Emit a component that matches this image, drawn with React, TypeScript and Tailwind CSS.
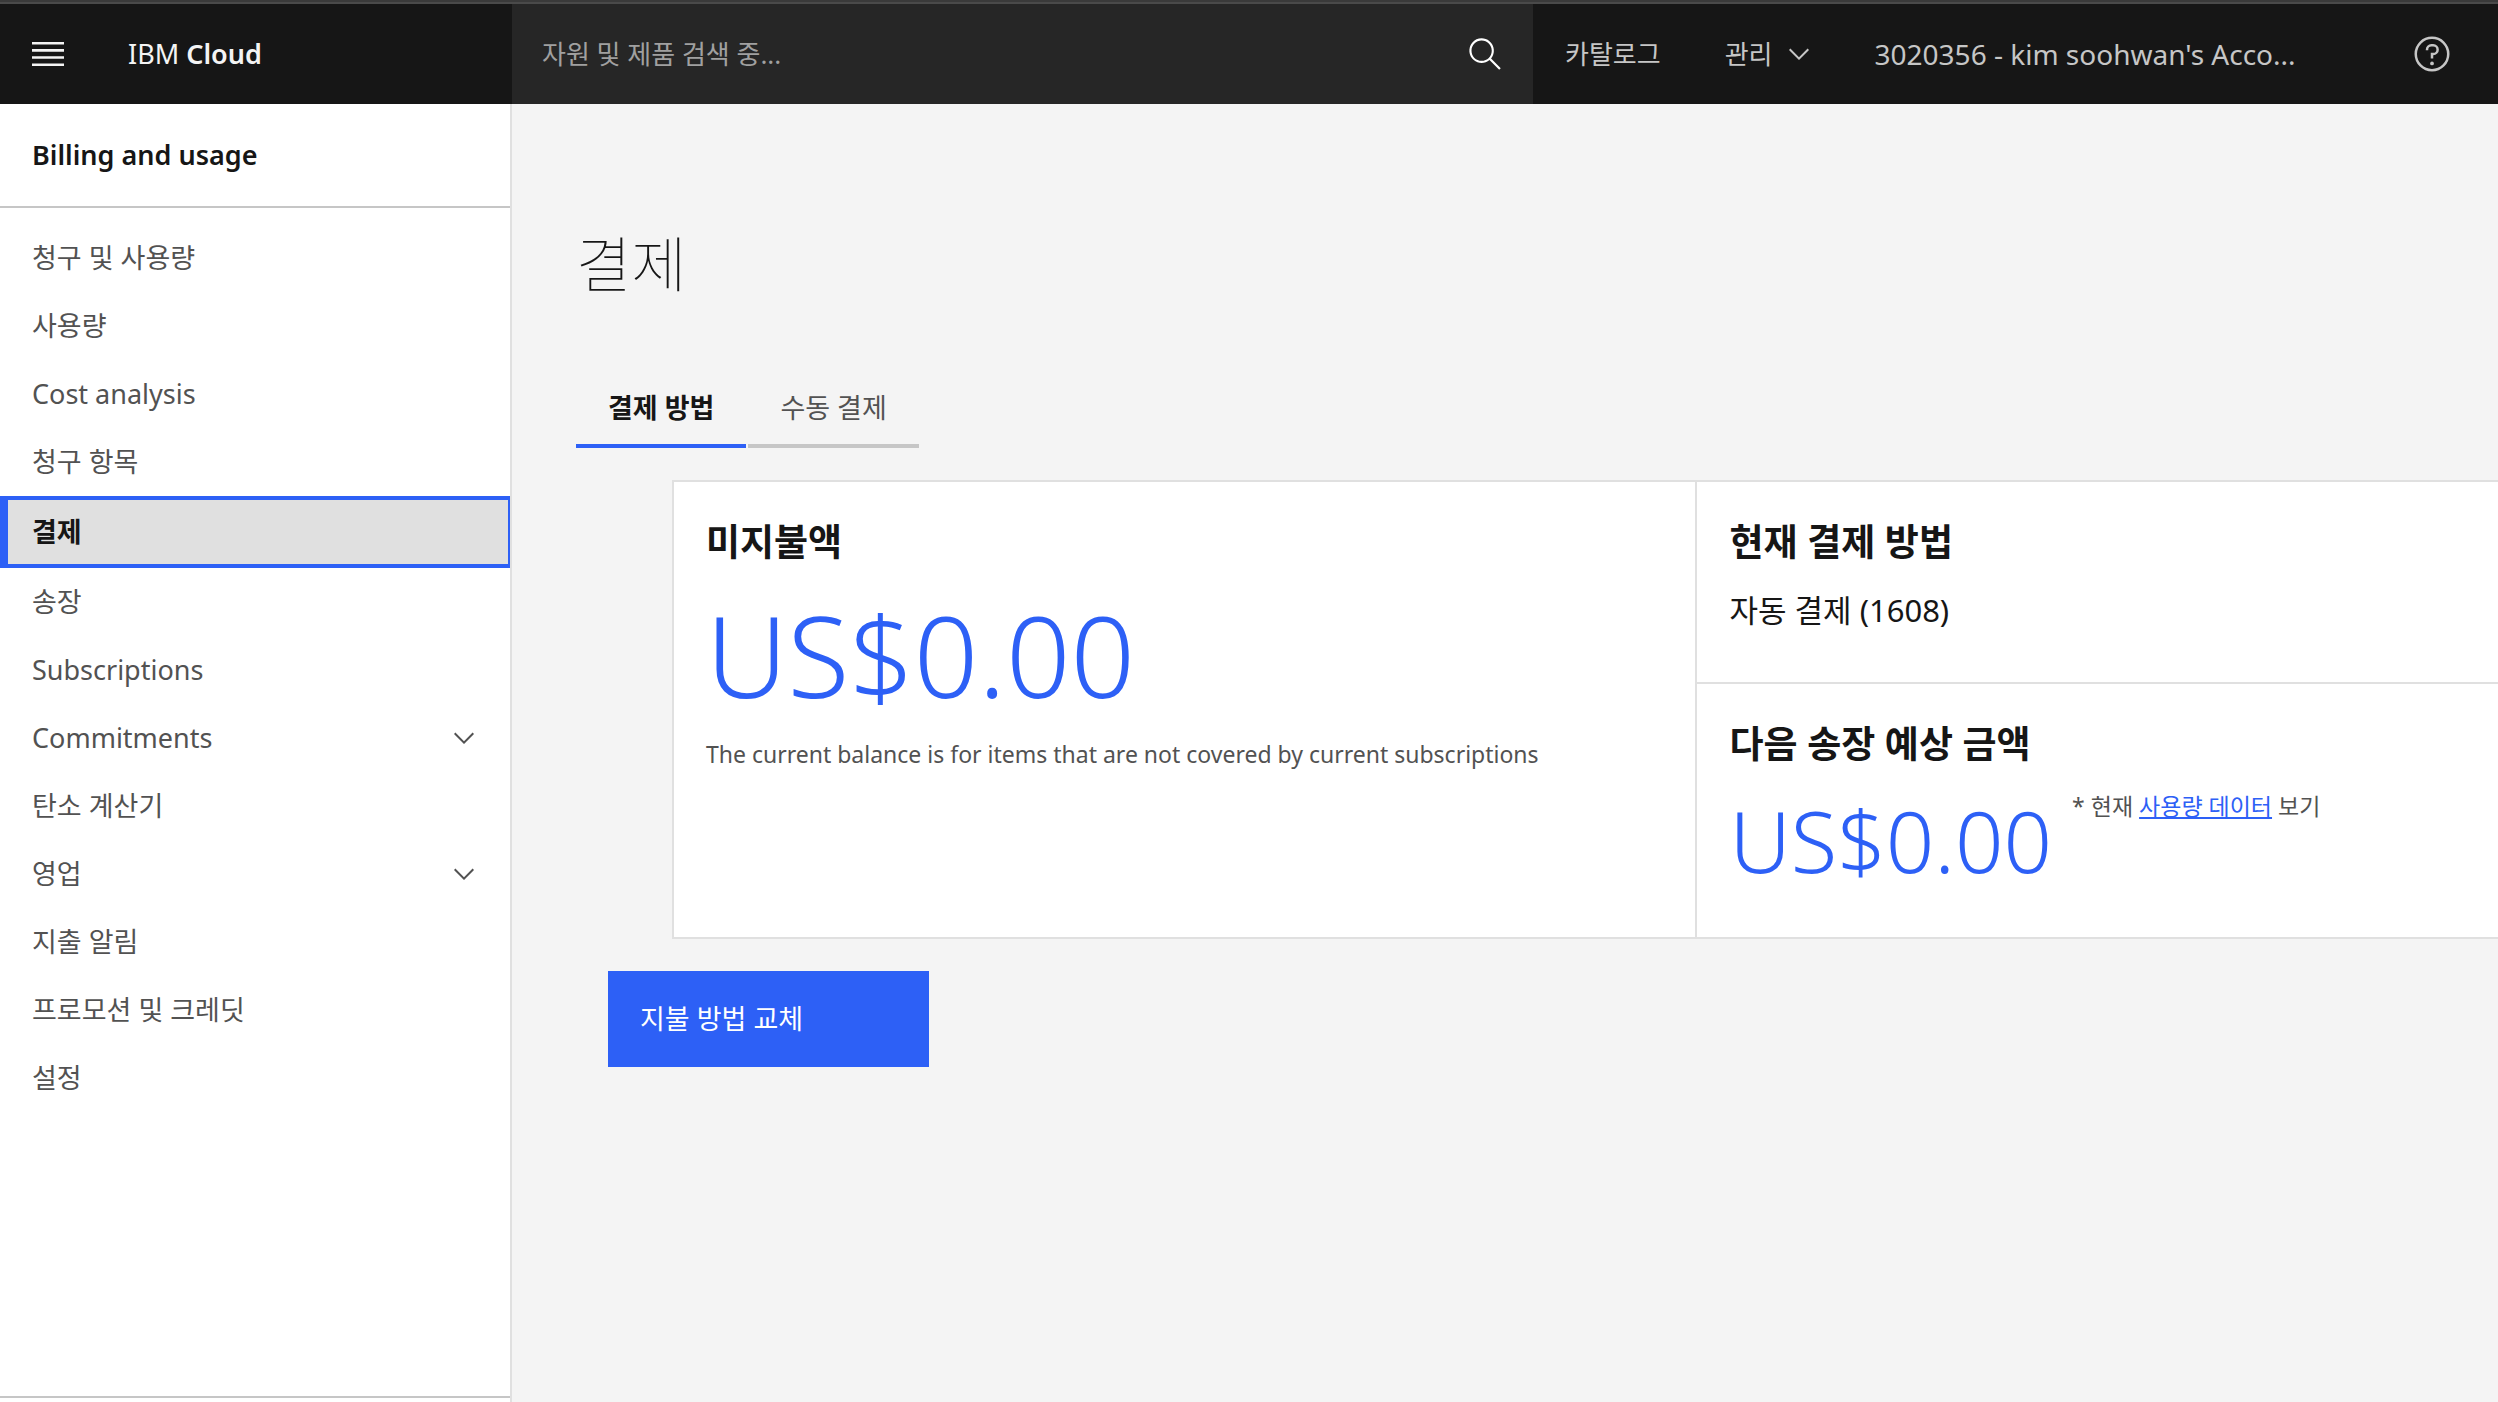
import clsx from "clsx";

const NAV_ITEMS = [
  { label: "청구 및 사용량" },
  { label: "사용량" },
  { label: "Cost analysis" },
  { label: "청구 항목" },
  { label: "결제", active: true },
  { label: "송장" },
  { label: "Subscriptions" },
  { label: "Commitments", expandable: true },
  { label: "탄소 계산기" },
  { label: "영업", expandable: true },
  { label: "지출 알림" },
  { label: "프로모션 및 크레딧" },
  { label: "설정" },
];

function ChevronDown({ className }: { className?: string }) {
  return (
    <svg viewBox="0 0 16 16" fill="currentColor" className={className} aria-hidden="true">
      <path d="M8 11L3 6l.7-.7L8 9.6l4.3-4.3.7.7z" />
    </svg>
  );
}

function Header() {
  return (
    <header className="flex h-[102px] items-stretch border-t-2 border-[#4a4a4a] bg-[#161616] text-[26px] text-[#c6c6c6]">
      <div className="flex w-128 shrink-0 items-center pl-8 text-[27px] text-[#f4f4f4]">
        <button type="button" aria-label="메뉴" className="mr-16">
          <svg viewBox="0 0 32 24" fill="currentColor" className="h-6 w-8">
            <path d="M0 0h32v2.6H0zM0 7.1h32v2.6H0zM0 14.2h32v2.6H0zM0 21.4h32V24H0z" />
          </svg>
        </button>
        <a href="#home">
          IBM <span className="font-semibold">Cloud</span>
        </a>
      </div>
      <form className="flex w-[1021px] shrink items-center bg-[#262626] px-[30px]">
        <input
          type="text"
          aria-label="검색"
          placeholder="자원 및 제품 검색 중..."
          className="min-w-0 flex-1 bg-transparent outline-none placeholder:text-[#a0a0a0]"
        />
        <button type="button" aria-label="검색" className="text-white">
          <svg viewBox="0 0 16 16" fill="currentColor" className="size-9">
            <path d="M15 14.3L10.7 10c1.9-2.3 1.6-5.8-.7-7.7S4.2.7 2.3 3 .7 8.8 3 10.7c2 1.7 5 1.7 7 0l4.3 4.3.7-.7zM2 6.5C2 4 4 2 6.5 2S11 4 11 6.5 9 11 6.5 11 2 9 2 6.5z" />
          </svg>
        </button>
      </form>
      <nav className="flex flex-1 items-center whitespace-nowrap">
        <a href="#catalog" className="px-8">
          카탈로그
        </a>
        <button type="button" className="flex items-center gap-2.5 pr-7 pl-8">
          관리
          <ChevronDown className="size-8" />
        </button>
        <a href="#account" className="pl-8 text-[28px]">
          3020356 - kim soohwan's Acco...
        </a>
        <button type="button" aria-label="도움말" className="mr-[46px] ml-auto">
          <svg viewBox="0 0 32 32" fill="currentColor" className="size-10">
            <path d="M16 2a14 14 0 1 0 14 14A14 14 0 0 0 16 2zm0 26a12 12 0 1 1 12-12 12 12 0 0 1-12 12z" />
            <circle cx="16" cy="23.5" r="1.5" />
            <path d="M17 8h-1.5a4.49 4.49 0 0 0-4.5 4.5v.5h2v-.5a2.5 2.5 0 0 1 2.5-2.5H17a2.5 2.5 0 0 1 0 5h-2v4.5h2V17a4.5 4.5 0 0 0 0-9z" />
          </svg>
        </button>
      </nav>
    </header>
  );
}

function Sidebar() {
  return (
    <aside className="flex w-128 shrink-0 flex-col border-r-2 border-[#e0e0e0] bg-white text-[27px] text-[#525252]">
      <h2 className="flex h-26 items-center border-b-2 border-[#c6c6c6] pl-8 font-semibold text-[#161616]">
        Billing and usage
      </h2>
      <nav className="mt-4 flex flex-col">
        {NAV_ITEMS.map(({ label, active, expandable }) =>
          expandable ? (
            <button
              key={label}
              type="button"
              className="flex h-17 items-center justify-between pr-[30px] pl-8 text-left"
            >
              {label}
              <ChevronDown className="size-8" />
            </button>
          ) : (
            <a
              key={label}
              href={`#${label}`}
              className={clsx(
                "flex items-center",
                active
                  ? "h-18 border-y-4 border-r-2 border-l-8 border-[#2d60f6] bg-[#e0e0e0] pl-6 font-semibold text-[#161616]"
                  : "h-17 pl-8"
              )}
            >
              {label}
            </a>
          )
        )}
      </nav>
      <div className="mt-auto h-1.5 border-t-2 border-[#c6c6c6]" />
    </aside>
  );
}

export default function App() {
  return (
    <div className="flex min-h-screen flex-col border-t-2 border-[#3a3a3a] bg-[#f4f4f4] font-['Noto_Sans','Noto_Sans_CJK_KR',sans-serif] text-[#161616]">
      <Header />
      <div className="flex flex-1">
        <Sidebar />
        <main className="min-w-0 flex-1 pt-28 pl-16">
          <h1 className="text-[60px] leading-24 font-thin">결제</h1>

          <div role="tablist" className="mt-14 flex gap-0.5 text-[27px]">
            <button
              type="button"
              role="tab"
              aria-selected="true"
              className="h-20 border-b-4 border-[#2d60f6] px-8 pt-1 font-semibold"
            >
              결제 방법
            </button>
            <button
              type="button"
              role="tab"
              aria-selected="false"
              className="h-20 border-b-4 border-[#c6c6c6] px-8 pt-1 text-[#525252]"
            >
              수동 결제
            </button>
          </div>

          {/* Balance cards */}
          <div className="mt-8 ml-24 grid grid-cols-[56fr_44fr] border-y-2 border-l-2 border-[#e0e0e0] bg-white">
            <section className="px-8 pt-8">
              <h2 className="text-[37px] leading-14 font-bold">미지불액</h2>
              <p className="text-[113px] leading-42 font-light text-[#2d60f6]">US$0.00</p>
              <p className="text-[23px] leading-8 text-[#525252]">
                The current balance is for items that are not covered by current subscriptions
              </p>
            </section>
            <div className="border-l-2 border-[#e0e0e0]">
              <section className="h-[202px] border-b-2 border-[#e0e0e0] px-8 pt-8">
                <h2 className="text-[37px] leading-14 font-bold">현재 결제 방법</h2>
                <p className="mt-4 text-[31px] leading-12">자동 결제 (1608)</p>
              </section>
              <section className="h-[253px] px-8 pt-8">
                <h2 className="text-[37px] leading-14 font-bold">다음 송장 예상 금액</h2>
                <div className="mt-4 flex items-start gap-5">
                  <p className="text-[85px] leading-26 font-light text-[#2d60f6]">US$0.00</p>
                  <p className="text-[23px] leading-9 text-[#525252]">
                    * 현재{" "}
                    <a href="#usage" className="text-[#2d60f6] underline">
                      사용량 데이터
                    </a>{" "}
                    보기
                  </p>
                </div>
              </section>
            </div>
          </div>

          <button
            type="button"
            className="mt-8 ml-8 h-24 w-[321px] bg-[#2d60f6] pl-8 text-left text-[27px] text-white"
          >
            지불 방법 교체
          </button>
        </main>
      </div>
    </div>
  );
}
